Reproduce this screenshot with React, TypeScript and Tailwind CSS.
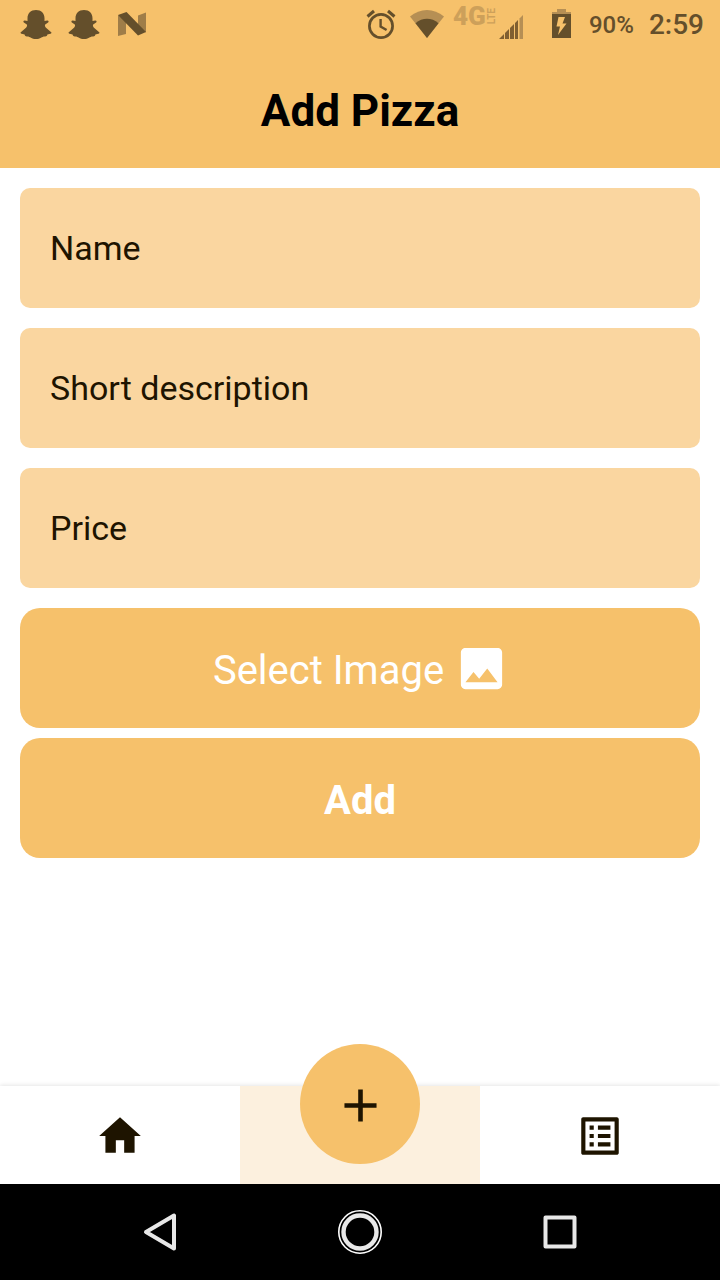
import React from "react";

function Ghost() {
  return (
    <svg viewBox="0 0 32 32" className="h-8 w-8" fill="#644f2b" aria-hidden="true">
      <path d="M16 2C10.700 2 7.500 5.400 7.500 10.300V13l-2.800-.6c-1.500 0-1.600 1.400-.8 2l2.900 2c.7.900.1 2.200-.8 3.400L.5 24.600c0 1.300 1.100 1.500 4.100 1.900.5 1.500 1 2 2.600 1.900C10 28.300 11.500 31 16 31s6-2.700 8.800-2.600c1.600.1 2.100-.4 2.600-1.900 3-.4 4.100-.6 4.100-1.900L26 19.800c-.9-1.200-1.500-2.500-.8-3.400l2.900-2c.8-.6.7-2-.8-2l-2.800.6v-2.700C24.500 5.400 21.300 2 16 2z" />
    </svg>
  );
}

function StatusBar() {
  return (
    <div className="flex h-12 items-center justify-between px-4 font-medium text-[#644f2b]">
      <div className="flex items-center gap-4 pl-1">
        <Ghost />
        <Ghost />
        <svg viewBox="0 0 32 32" className="h-8 w-8" aria-hidden="true">
          <path d="M2 7l8 5v14l-8 2zM30 4.500l-8 3v12l8 5z" fill="#9f7d48" />
          <path d="M2 7l8.500-3L30 24l-8 3.500z" fill="#644f2b" />
        </svg>
      </div>
      <div className="flex items-center">
        <svg viewBox="0 0 32 32" className="mr-3 h-8 w-8" fill="none" stroke="#644f2b" aria-hidden="true">
          <circle cx="16" cy="18" r="11.600" strokeWidth="2.700" />
          <path d="M15.600 11v7.500l6 3.500" strokeWidth="2.400" />
          <path d="M2.500 8.500L9 3M29.500 8.500L23 3" strokeWidth="3" />
        </svg>
        <svg viewBox="0 0 36 32" className="mr-2 h-8 w-9" aria-hidden="true">
          <path d="M1 8.500C11-.2 25-.2 35 8.500L18 30z" fill="#b68f54" />
          <path d="M6.500 15.200c7-5.800 16-5.800 23 0L18 30z" fill="#644f2b" />
        </svg>
        <div className="mb-4 flex h-5 w-11 items-center justify-between font-bold text-[#cda05a]">
          <span className="text-[26px] leading-5 font-black">4G</span>
          <span className="rotate-180 text-[10px] leading-[10px] [writing-mode:vertical-rl]">LTE</span>
        </div>
        <svg viewBox="0 0 28 32" className="mr-[25px] h-8 w-7" aria-hidden="true">
          <path d="M2 31l5-5v5zM8 25l4-4v10H8zM13 20l4-4v15h-4zM18 15l3-3v19h-3z" fill="#805f31" />
          <path d="M22.500 10.500L26 7v24h-3.500z" fill="#b68f54" />
        </svg>
        <svg viewBox="0 0 24 32" className="mr-[15px] h-8 w-6" aria-hidden="true">
          <path d="M2 6V4h5V1h9v3h5v3H2z" fill="#b68f54" />
          <path d="M2 6h19v24H2z" fill="#644f2b" />
          <path d="M8.500 9H15l-2.500 6.500h4L8 27l2-8.500H6.500z" fill="#f6c16b" />
        </svg>
        <span className="mr-[15px] pt-0.5 text-2xl">90%</span>
        <span className="pt-0.5 text-[28px] leading-9">2:59</span>
      </div>
    </div>
  );
}

const fields = [
  { id: "name", label: "Name" },
  { id: "description", label: "Short description" },
  { id: "price", label: "Price" },
];

export default function App() {
  return (
    <div className="flex min-h-screen flex-col bg-white font-['Roboto',sans-serif]">
      <header className="bg-[#f6c16b]">
        <StatusBar />
        <div className="flex h-[120px] items-center justify-center">
          <h1 className="pt-1.5 text-[44px] leading-none font-bold text-black">Add Pizza</h1>
        </div>
      </header>

      <main className="flex-1 p-5">
        <form className="flex flex-col gap-5" onSubmit={(e) => e.preventDefault()}>
          {fields.map((f) => (
            <input
              key={f.id}
              id={f.id}
              name={f.id}
              aria-label={f.label}
              placeholder={f.label}
              className="h-[120px] w-full rounded-[10px] bg-[#fad6a0] px-[30px] text-[34px] text-[#1e1400] outline-none placeholder:text-[#1e1400]"
            />
          ))}
          <div className="flex flex-col gap-[10px]">
            <button type="button" className="flex h-[120px] items-center justify-center gap-[10px] rounded-[20px] bg-[#f6c16b] pl-0.5 text-[40px] text-white">
              <span className="pt-1.5">Select Image</span>
              <svg viewBox="0 0 24 24" className="size-[55px]" fill="currentColor" aria-hidden="true">
                <path d="M21 19V5c0-1.100-.9-2-2-2H5c-1.100 0-2 .9-2 2v14c0 1.100.9 2 2 2h14c1.100 0 2-.9 2-2zM8.500 13.500l2.500 3.010L14.500 12l4.500 6H5l3.500-4.500z" />
              </svg>
            </button>
            <button type="submit" className="h-[120px] rounded-[20px] bg-[#f6c16b] pt-1.5 text-[40px] font-bold text-white">
              Add
            </button>
          </div>
        </form>
      </main>

      <nav aria-label="Main" className="relative grid h-[98px] grid-cols-3 bg-white text-[#1e1400] shadow-[0_-1px_4px_rgba(0,0,0,0.1)]">
        <a href="#home" aria-label="Home" className="flex items-center justify-center pt-0.5">
          <svg viewBox="0 0 24 24" className="size-[50px]" fill="currentColor" aria-hidden="true">
            <path d="M10 20v-6h4v6h5v-8h3L12 3 2 12h3v8z" />
          </svg>
        </a>
        <div className="bg-[#fcf0de]" />
        <a href="#orders" aria-label="Orders" className="flex items-center justify-center pt-0.5">
          <svg viewBox="0 0 24 24" className="size-[50px]" fill="currentColor" aria-hidden="true">
            <path d="M19 5v14H5V5h14m1.100-2H3.900c-.5 0-.9.400-.9.900v16.200c0 .4.400.9.900.9h16.200c.4 0 .9-.5.900-.9V3.900c0-.5-.5-.9-.9-.9zM11 7h6v2h-6V7zm0 4h6v2h-6v-2zm0 4h6v2h-6v-2zM7 7h2v2H7V7zm0 4h2v2H7v-2zm0 4h2v2H7v-2z" />
          </svg>
        </a>
        <a href="#add" aria-label="Add pizza" className="absolute bottom-5 left-1/2 flex size-[120px] -translate-x-1/2 items-center justify-center rounded-full bg-[#f6c16b] pt-0.5">
          <svg viewBox="0 0 24 24" className="size-[55px]" fill="currentColor" aria-hidden="true">
            <path d="M19 13h-6v6h-2v-6H5v-2h6V5h2v6h6v2z" />
          </svg>
        </a>
      </nav>

      <div className="flex h-24 items-center justify-center gap-[152px] bg-black">
        <button type="button" aria-label="Back">
          <svg viewBox="0 0 48 48" className="size-12" fill="none" stroke="#e8e8e8" strokeWidth="4" strokeLinejoin="round" aria-hidden="true">
            <path d="M10 24L38 7.500v33z" />
          </svg>
        </button>
        <button type="button" aria-label="Home screen">
          <svg viewBox="0 0 48 48" className="size-12" fill="none" aria-hidden="true">
            <circle cx="24" cy="24" r="21.200" stroke="#fff" strokeWidth="1.600" />
            <circle cx="24" cy="24" r="16.500" stroke="#e8e8e8" strokeWidth="4.400" />
          </svg>
        </button>
        <button type="button" aria-label="Recent apps">
          <svg viewBox="0 0 48 48" className="size-12" fill="none" stroke="#e8e8e8" strokeWidth="4" strokeLinejoin="round" aria-hidden="true">
            <path d="M9.500 9.500h29v29h-29z" />
          </svg>
        </button>
      </div>
    </div>
  );
}
